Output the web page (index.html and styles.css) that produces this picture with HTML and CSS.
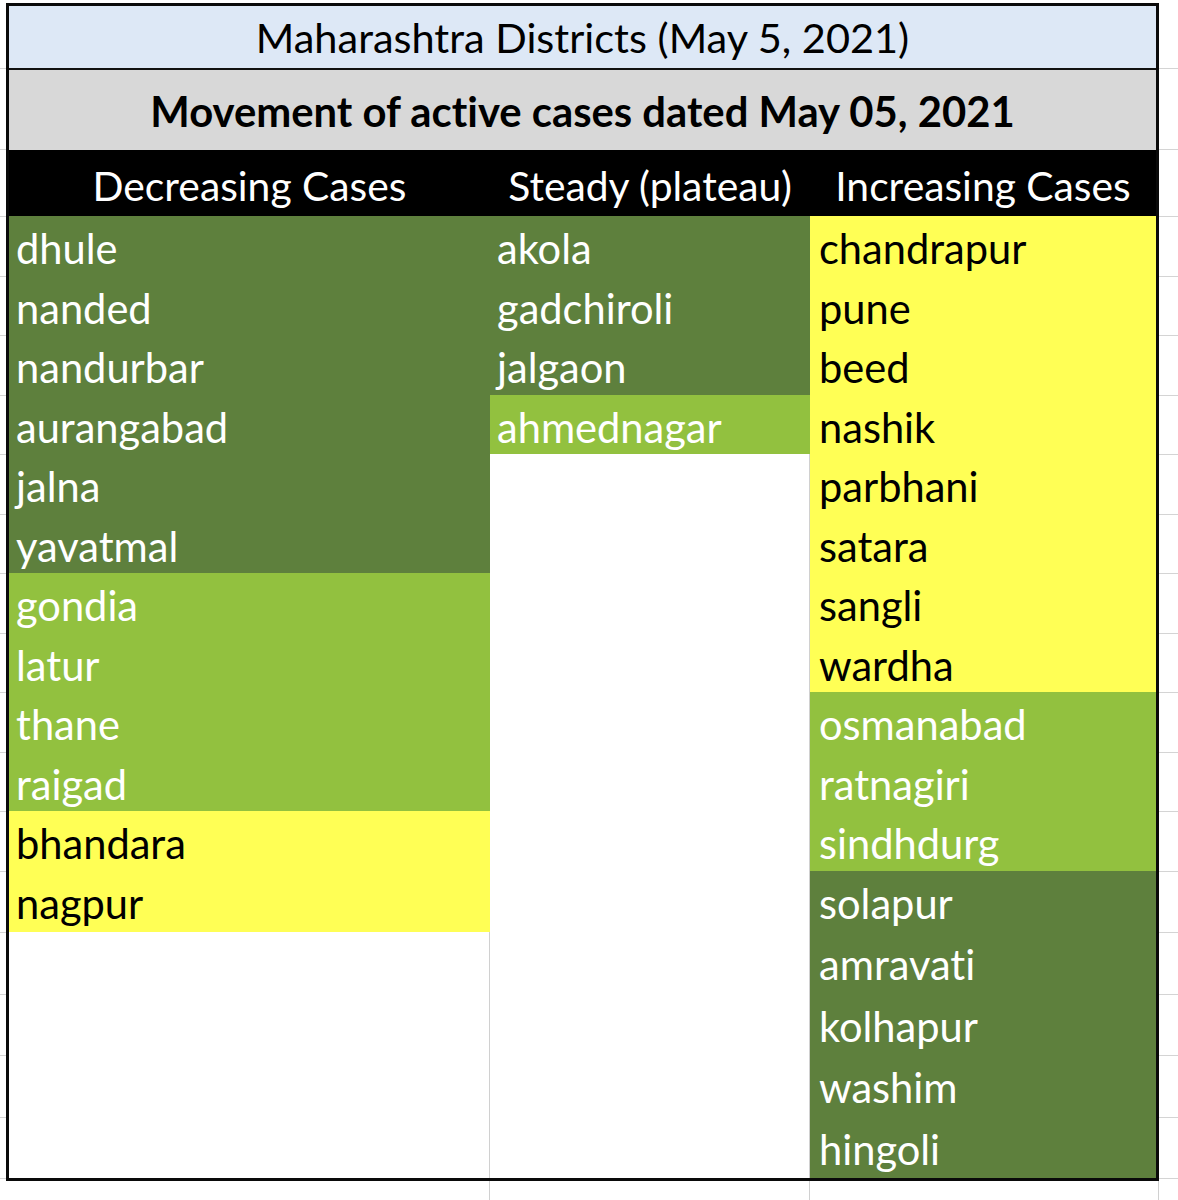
FILE: index.html
```html
<!DOCTYPE html>
<html>
<head>
<meta charset="utf-8">
<link rel="stylesheet" href="styles.css">
</head>
<body>
<div class="sheet">
  <div class="gutter gutter-left">
    <div class="tick t-title"></div><div class="tick t-sub"></div><div class="tick t-head"></div>
    <div class="tick"></div><div class="tick"></div><div class="tick"></div><div class="tick"></div>
    <div class="tick"></div><div class="tick"></div><div class="tick"></div><div class="tick"></div>
    <div class="tick"></div><div class="tick"></div><div class="tick"></div><div class="tick"></div>
    <div class="tick"></div><div class="tick"></div><div class="tick"></div><div class="tick"></div>
  </div>
  <div class="table">
    <div class="title">Maharashtra Districts (May 5, 2021)</div>
    <div class="subtitle">Movement of active cases dated May 05, 2021</div>
    <div class="head">Decreasing Cases</div>
    <div class="head">Steady (plateau)</div>
    <div class="head">Increasing Cases</div>
    <div class="col">
      <div class="cell dark">dhule</div>
      <div class="cell dark">nanded</div>
      <div class="cell dark">nandurbar</div>
      <div class="cell dark">aurangabad</div>
      <div class="cell dark">jalna</div>
      <div class="cell dark">yavatmal</div>
      <div class="cell light">gondia</div>
      <div class="cell light">latur</div>
      <div class="cell light">thane</div>
      <div class="cell light">raigad</div>
      <div class="cell yellow">bhandara</div>
      <div class="cell yellow">nagpur</div>
      <div class="cell empty"></div>
      <div class="cell empty"></div>
      <div class="cell empty"></div>
      <div class="cell empty"></div>
    </div>
    <div class="col">
      <div class="cell dark">akola</div>
      <div class="cell dark">gadchiroli</div>
      <div class="cell dark">jalgaon</div>
      <div class="cell light">ahmednagar</div>
      <div class="cell empty"></div>
      <div class="cell empty"></div>
      <div class="cell empty"></div>
      <div class="cell empty"></div>
      <div class="cell empty"></div>
      <div class="cell empty"></div>
      <div class="cell empty"></div>
      <div class="cell empty"></div>
      <div class="cell empty"></div>
      <div class="cell empty"></div>
      <div class="cell empty"></div>
      <div class="cell empty"></div>
    </div>
    <div class="col col-last">
      <div class="cell yellow">chandrapur</div>
      <div class="cell yellow">pune</div>
      <div class="cell yellow">beed</div>
      <div class="cell yellow">nashik</div>
      <div class="cell yellow">parbhani</div>
      <div class="cell yellow">satara</div>
      <div class="cell yellow">sangli</div>
      <div class="cell yellow">wardha</div>
      <div class="cell light">osmanabad</div>
      <div class="cell light">ratnagiri</div>
      <div class="cell light">sindhdurg</div>
      <div class="cell dark">solapur</div>
      <div class="cell dark">amravati</div>
      <div class="cell dark">kolhapur</div>
      <div class="cell dark">washim</div>
      <div class="cell dark">hingoli</div>
    </div>
  </div>
  <div class="gutter gutter-right">
    <div class="tick t-title"></div><div class="tick t-sub"></div><div class="tick t-head"></div>
    <div class="tick"></div><div class="tick"></div><div class="tick"></div><div class="tick"></div>
    <div class="tick"></div><div class="tick"></div><div class="tick"></div><div class="tick"></div>
    <div class="tick"></div><div class="tick"></div><div class="tick"></div><div class="tick"></div>
    <div class="tick"></div><div class="tick"></div><div class="tick"></div><div class="tick"></div>
  </div>
</div>
<div class="below">
  <div class="below-gap"></div>
  <div class="below-cell line"></div>
  <div class="below-cell line"></div>
  <div class="below-cell line"></div>
  <div class="below-rest"></div>
</div>
</body>
</html>
```

FILE: styles.css
```css
* { box-sizing: border-box; }
html, body {
  margin: 0;
  padding: 0;
  background: #ffffff;
}
body {
  font-family: Lato, "Open Sans", "Liberation Sans", sans-serif;
  font-variant-ligatures: none;
  font-feature-settings: "liga" 0, "clig" 0;
  color: #000;
}
.sheet {
  display: flex;
  align-items: flex-start;
  padding-top: 3px;
}
.gutter {
  display: flex;
  flex-direction: column;
  margin-top: -3px;
}
.gutter-left { width: 6px; }
.gutter-right { flex: 1; }
.tick {
  height: 59.55px;
  border-bottom: 1px solid #d4d4d4;
}
.tick:nth-child(n+15) { height: 61.4px; }
.tick.t-title { height: 69px; }
.tick.t-sub { height: 81px; }
.tick.t-head { height: 67px; }

.table {
  width: 1153px;
  border: 3px solid #0a0a0a;
  display: grid;
  grid-template-columns: 481px 320px 346px;
}
.title {
  grid-column: 1 / -1;
  height: 64px;
  background: #dde8f6;
  border-bottom: 2px solid #111;
  font-size: 41.5px;
  line-height: 62px;
  text-align: center;
}
.subtitle {
  grid-column: 1 / -1;
  height: 80px;
  background: #d8d8d8;
  font-size: 41.8px;
  font-weight: 700;
  line-height: 82px;
  text-align: center;
}
.head {
  height: 66px;
  background: #000;
  color: #fff;
  font-size: 40.8px;
  line-height: 72px;
  text-align: center;
  white-space: nowrap;
}
.col {
  display: flex;
  flex-direction: column;
}
.cell {
  height: 59.55px;
  font-size: 41.6px;
  line-height: 64px;
  padding-left: 7px;
  white-space: nowrap;
}
.cell:nth-child(n+12) { height: 61.4px; }
.col-last .cell { padding-left: 9px; }
.dark { background: #5e803d; color: #fff; }
.light { background: #92c13f; color: #fff; }
.yellow { background: #ffff55; color: #000; }
.empty {
  background: #fff;
  border-right: 1px solid #d0d0d0;
}
.col-last .empty { border-right: none; }

.below {
  display: flex;
  height: 19px;
}
.below-gap { width: 9px; }
.below-cell { border-right: 1px solid #d0d0d0; }
.below-cell:nth-child(2) { width: 481px; }
.below-cell:nth-child(3) { width: 320px; }
.below-cell:nth-child(4) { width: 349px; }
.below-rest { flex: 1; }
```
